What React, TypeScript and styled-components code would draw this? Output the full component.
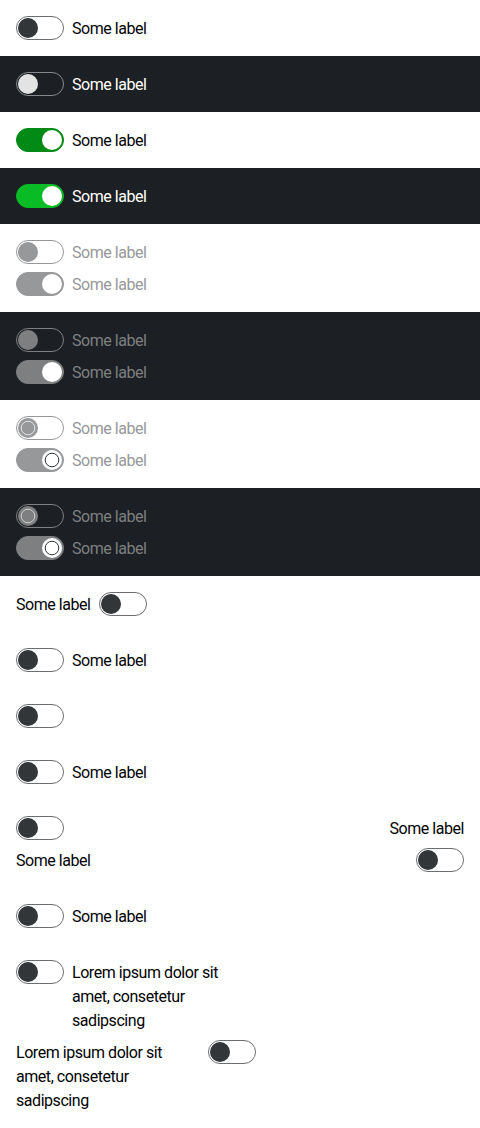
import React from "react";
import styled, { createGlobalStyle, css } from "styled-components";

type Theme = "light" | "dark";
type State = "default" | "disabled" | "loading";

const GlobalStyle = createGlobalStyle`
  html, body { margin: 0; padding: 0; background: #fff; }
  body { font-family: Roboto, "Liberation Sans", Arial, sans-serif; -webkit-font-smoothing: antialiased; }
  * { box-sizing: border-box; }
`;

const palette = {
  light: {
    bg: "#ffffff",
    text: "#010205",
    border: "#6b6d70",
    thumb: "#323639",
    checked: "#018a16",
    disabled: "#96989a",
  },
  dark: {
    bg: "#1c2024",
    text: "#ffffff",
    border: "#878a8d",
    thumb: "#e3e3e3",
    checked: "#09bb24",
    disabled: "#7e7f80",
  },
};

const Section = styled.div<{ $theme: Theme }>`
  background: ${(p) => palette[p.$theme].bg};
  padding: 16px;
  display: flex;
  flex-direction: column;
  gap: 8px;
`;

const SplitSection = styled.div`
  background: #fff;
  padding: 16px;
  display: flex;
  justify-content: space-between;
  align-items: flex-start;
`;

const Limited = styled.div`
  width: 240px;
  display: flex;
  flex-direction: column;
  gap: 8px;
`;

const Row = styled.label<{ $reverse?: boolean; $stacked?: boolean; $end?: boolean; $fill?: boolean }>`
  display: ${(p) => (p.$fill ? "flex" : "inline-flex")};
  align-self: flex-start;
  flex-direction: ${(p) =>
    p.$stacked ? (p.$reverse ? "column-reverse" : "column") : p.$reverse ? "row-reverse" : "row"};
  align-items: ${(p) => (p.$end ? "flex-end" : "flex-start")};
  justify-content: ${(p) => (p.$fill ? "space-between" : "flex-start")};
  gap: 8px;
  cursor: pointer;
`;

const Label = styled.span<{ $theme: Theme; $state: State; $fill?: boolean }>`
  font-size: 16px;
  line-height: 24px;
  letter-spacing: -0.45px;
  padding-top: 1px;
  margin-bottom: -1px;
  color: ${(p) => (p.$state === "default" ? palette[p.$theme].text : palette[p.$theme].disabled)};
  ${(p) => p.$fill && css`flex: 1;`}
`;

const Track = styled.span<{ $theme: Theme; $state: State; $checked: boolean }>`
  position: relative;
  flex: none;
  width: 48px;
  height: 24px;
  border-radius: 12px;
  border: 1px solid
    ${(p) =>
      p.$state !== "default"
        ? palette[p.$theme].disabled
        : p.$checked
        ? palette[p.$theme].checked
        : palette[p.$theme].border};
  background: ${(p) =>
    !p.$checked
      ? "transparent"
      : p.$state !== "default"
      ? palette[p.$theme].disabled
      : palette[p.$theme].checked};
`;

const Thumb = styled.span<{ $theme: Theme; $state: State; $checked: boolean }>`
  position: absolute;
  top: 1px;
  left: ${(p) => (p.$checked ? "25px" : "1px")};
  width: 20px;
  height: 20px;
  border-radius: 50%;
  display: flex;
  align-items: center;
  justify-content: center;
  background: ${(p) =>
    p.$checked ? "#ffffff" : p.$state !== "default" ? palette[p.$theme].disabled : palette[p.$theme].thumb};
`;

const Spinner = ({ color }: { color: string }) => (
  <svg width="16" height="16" viewBox="0 0 16 16">
    <circle cx="8" cy="8" r="6.8" fill="none" stroke={color} strokeWidth="1" />
  </svg>
);

type SwitchProps = {
  theme?: Theme;
  state?: State;
  checked?: boolean;
  label?: string;
  reverse?: boolean;
  stacked?: boolean;
  end?: boolean;
  fill?: boolean;
};

const Switch = ({
  theme = "light",
  state = "default",
  checked = false,
  label,
  reverse,
  stacked,
  end,
  fill,
}: SwitchProps) => {
  const spinColor = checked ? "#323639" : theme === "light" ? "#e6e6e6" : "#d0d0d0";
  return (
    <Row $reverse={reverse} $stacked={stacked} $end={end} $fill={fill}>
      <Track $theme={theme} $state={state} $checked={checked}>
        <Thumb $theme={theme} $state={state} $checked={checked}>
          {state === "loading" && <Spinner color={spinColor} />}
        </Thumb>
      </Track>
      {label && (
        <Label $theme={theme} $state={state} $fill={fill}>
          {label}
        </Label>
      )}
    </Row>
  );
};

const L = "Some label";
const LONG = "Lorem ipsum dolor sit amet, consetetur sadipscing";

export default function App() {
  return (
    <>
      <GlobalStyle />
      <Section $theme="light">
        <Switch label={L} />
      </Section>
      <Section $theme="dark">
        <Switch theme="dark" label={L} />
      </Section>
      <Section $theme="light">
        <Switch checked label={L} />
      </Section>
      <Section $theme="dark">
        <Switch theme="dark" checked label={L} />
      </Section>
      <Section $theme="light">
        <Switch state="disabled" label={L} />
        <Switch state="disabled" checked label={L} />
      </Section>
      <Section $theme="dark">
        <Switch theme="dark" state="disabled" label={L} />
        <Switch theme="dark" state="disabled" checked label={L} />
      </Section>
      <Section $theme="light">
        <Switch state="loading" label={L} />
        <Switch state="loading" checked label={L} />
      </Section>
      <Section $theme="dark">
        <Switch theme="dark" state="loading" label={L} />
        <Switch theme="dark" state="loading" checked label={L} />
      </Section>
      <Section $theme="light">
        <Switch label={L} reverse />
      </Section>
      <Section $theme="light">
        <Switch label={L} />
      </Section>
      <Section $theme="light">
        <Switch />
      </Section>
      <Section $theme="light">
        <Switch label={L} />
      </Section>
      <SplitSection>
        <Switch label={L} stacked />
        <Switch label={L} stacked reverse end />
      </SplitSection>
      <Section $theme="light">
        <Switch label={L} />
      </Section>
      <Section $theme="light">
        <Limited>
          <Switch label={LONG} fill />
          <Switch label={LONG} fill reverse />
        </Limited>
      </Section>
    </>
  );
}
